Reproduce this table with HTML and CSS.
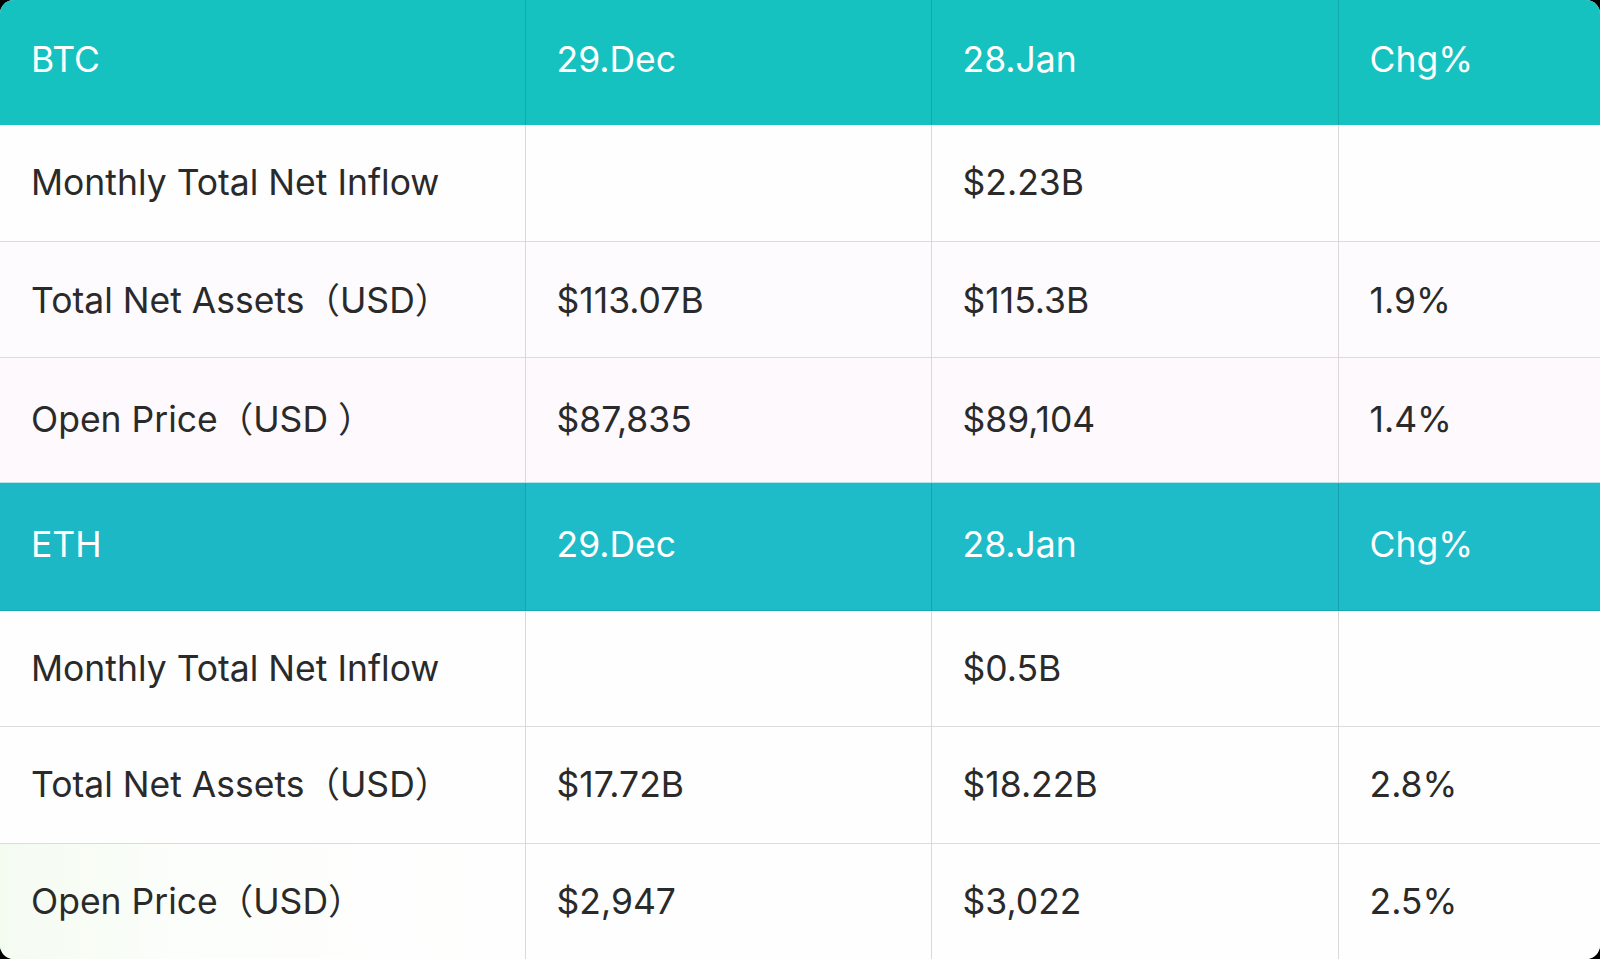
FILE: index.html
```html
<!DOCTYPE html>
<html>
<head>
<meta charset="utf-8">
<link rel="stylesheet" href="styles.css">
</head>
<body>
<div class="board">
  <table class="grid">
    <colgroup>
      <col class="c1"><col class="c2"><col class="c3"><col class="c4">
    </colgroup>
    <tr class="head btc"><th>BTC</th><th>29.Dec</th><th>28.Jan</th><th>Chg%</th></tr>
    <tr class="row r-a"><td>Monthly Total Net Inflow</td><td></td><td>$2.23B</td><td></td></tr>
    <tr class="row r-b"><td>Total Net Assets（USD）</td><td>$113.07B</td><td>$115.3B</td><td>1.9%</td></tr>
    <tr class="row r-c tall"><td>Open Price（USD ）</td><td>$87,835</td><td>$89,104</td><td>1.4%</td></tr>
    <tr class="head eth"><th>ETH</th><th>29.Dec</th><th>28.Jan</th><th>Chg%</th></tr>
    <tr class="row r-d"><td>Monthly Total Net Inflow</td><td></td><td>$0.5B</td><td></td></tr>
    <tr class="row r-d mid"><td>Total Net Assets（USD）</td><td>$17.72B</td><td>$18.22B</td><td>2.8%</td></tr>
    <tr class="row r-e last"><td>Open Price（USD）</td><td>$2,947</td><td>$3,022</td><td>2.5%</td></tr>
  </table>
</div>
</body>
</html>
```

FILE: styles.css
```css
html, body {
  margin: 0;
  padding: 0;
  background: #000;
}
.board {
  width: 1600px;
  height: 959px;
  border-radius: 14px;
  overflow: hidden;
  background: #fff;
}
.grid {
  width: 1600px;
  border-collapse: collapse;
  table-layout: fixed;
  font-family: Inter, "Noto Sans CJK SC", sans-serif;
  font-size: 35.5px;
  line-height: 43px;
}
.c1 { width: 525px; }
.c2 { width: 406px; }
.c3 { width: 407px; }
.c4 { width: 262px; }
th, td {
  text-align: left;
  padding: 0 0 0 31px;
  font-weight: 400;
  white-space: nowrap;
}
.head { height: 125px; }
.head th {
  color: #fff;
  padding-bottom: 6px;
  border-left: 1.5px solid #11a8a7;
}
.head th:first-child { border-left: none; }
.head.btc th { background: #16c2c0; }
.head.eth { height: 128px; }
.head.eth th {
  background: #1ebbc8;
  padding-bottom: 4px;
  border-left-color: #16a3b0;
  border-top: 1.5px solid #b7e3e6;
  border-bottom: 1.5px solid #17a8b4;
}
.head.eth th:first-child { background: #1db8c6; }
.row { height: 116px; }
.row.tall { height: 125px; }
.row.mid { height: 117px; }
.row td {
  color: #2a2a2a;
  border-left: 1.5px solid #d9d9d9;
  border-top: 1.5px solid #dcdcdc;
}
.row td:first-child { border-left: none; }
.head + .row td { border-top: none; }
.r-b td { padding-top: 3px; }
.r-a td { background: #fefefe; }
.r-b td { background: #fdfbfe; }
.r-c td { background: #fdf9fd; }
.r-d td { background: #fefefe; }
.r-e td { background: #fefefe; }
.r-e td:first-child { background: linear-gradient(90deg, #f4fbf1 0%, #fcfefb 40%, #fefefe 100%); }
```
